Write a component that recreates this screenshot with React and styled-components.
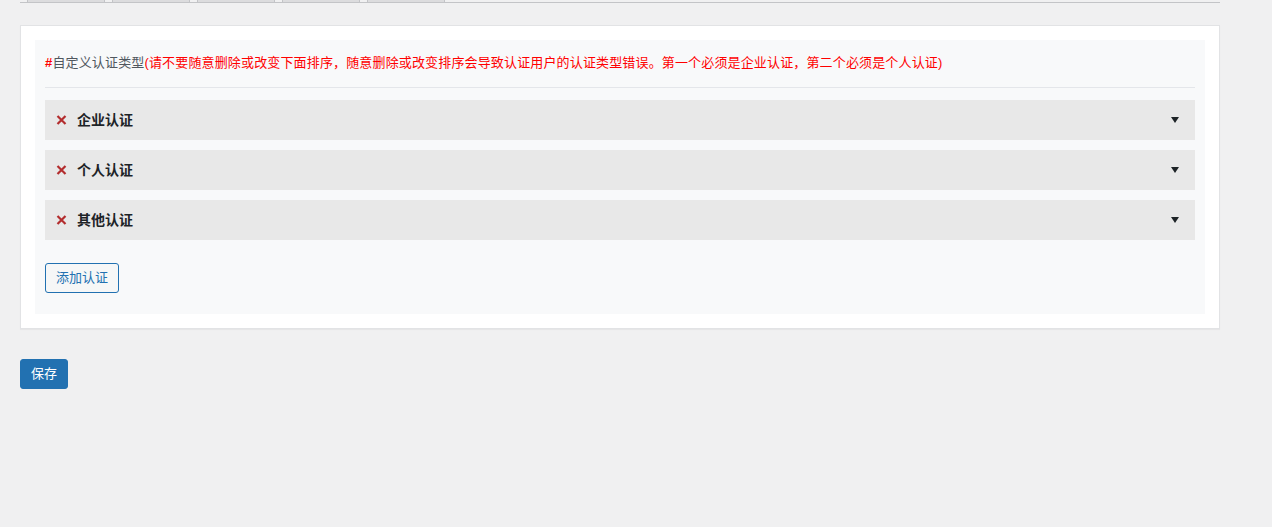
import React from 'react'
import styled, { createGlobalStyle } from 'styled-components'

let GlobalStyle = createGlobalStyle`
  body {
    margin: 0;
    background: #f0f0f1;
    font-family: "Liberation Sans", Arial, "Noto Sans CJK SC", sans-serif;
    font-size: 13px;
    color: #3c434a;
  }
`

let Page = styled.div`
  padding: 0 20px;
  width: 1200px;
`

let TabBar = styled.div`
  display: flex;
  align-items: flex-end;
  gap: 7px;
  height: 2px;
  padding-left: 7px;
  border-bottom: 1px solid #c3c4c7;
  overflow: hidden;
`

let Tab = styled.div`
  flex-shrink: 0;
  width: 76px;
  height: 30px;
  background: #dcdcde;
  border: 1px solid #c3c4c7;
  border-bottom: none;
`

let Card = styled.div`
  margin-top: 22px;
  background: #fff;
  border: 1px solid #e2e3e5;
  box-shadow: 0 1px 1px rgba(0, 0, 0, 0.04);
  padding: 14px;
`

let Panel = styled.div`
  background: #f8f9fa;
  padding: 10px 10px 21px;
`

let Heading = styled.div`
  height: 37px;
  line-height: 25px;
  border-bottom: 1px solid #e4e6ea;
  color: #50575e;
  white-space: nowrap;
  letter-spacing: 0.15px;
`

let Hash = styled.span`
  color: #ff0000;
  font-weight: bold;
`

let Warn = styled.span`
  color: #ff0000;
`

let List = styled.div`
  display: flex;
  flex-direction: column;
  gap: 10px;
  margin-top: 12px;
`

let Row = styled.div`
  display: flex;
  align-items: center;
  height: 40px;
  padding: 0 16px 0 11px;
  background: #e8e8e8;
`

let Title = styled.span`
  flex: 1;
  margin-left: 10px;
  padding-bottom: 3px;
  font-size: 14px;
  font-weight: bold;
  color: #1d2327;
`

let Remove = styled.svg`
  width: 11px;
  height: 10px;
  display: block;
`

let Caret = styled.svg`
  width: 8px;
  height: 6px;
  display: block;
`

let OutlineButton = styled.button`
  margin-top: 23px;
  height: 30px;
  padding: 0 10px 3px;
  border: 1px solid #2271b1;
  border-radius: 3px;
  background: #f6f7f7;
  color: #2271b1;
  font: inherit;
  cursor: pointer;
`

let PrimaryButton = styled.button`
  margin-top: 30px;
  height: 30px;
  padding: 0 10px 3px;
  border: 1px solid #2271b1;
  border-radius: 3px;
  background: #2271b1;
  color: #fff;
  font: inherit;
  cursor: pointer;
`

let types = ['企业认证', '个人认证', '其他认证']

let App = () => {
  return (
    <>
      <GlobalStyle />
      <Page>
        <TabBar>
          {[0, 1, 2, 3, 4].map(i => <Tab key={i} />)}
        </TabBar>
        <Card>
          <Panel>
            <Heading>
              <Hash>#</Hash>自定义认证类型
              <Warn>(请不要随意删除或改变下面排序，随意删除或改变排序会导致认证用户的认证类型错误。第一个必须是企业认证，第二个必须是个人认证)</Warn>
            </Heading>
            <List>
              {types.map(t =>
                <Row key={t}>
                  <Remove viewBox='0 0 11 10'>
                    <path d='M1.5 1 L9.5 9 M9.5 1 L1.5 9' stroke='#b32d2e' strokeWidth='2.2' />
                  </Remove>
                  <Title>{t}</Title>
                  <Caret viewBox='0 0 8 6'>
                    <polygon points='0,0 8,0 4,6' fill='#1d2327' />
                  </Caret>
                </Row>
              )}
            </List>
            <OutlineButton>添加认证</OutlineButton>
          </Panel>
        </Card>
        <PrimaryButton>保存</PrimaryButton>
      </Page>
    </>
  )
}

export default App
